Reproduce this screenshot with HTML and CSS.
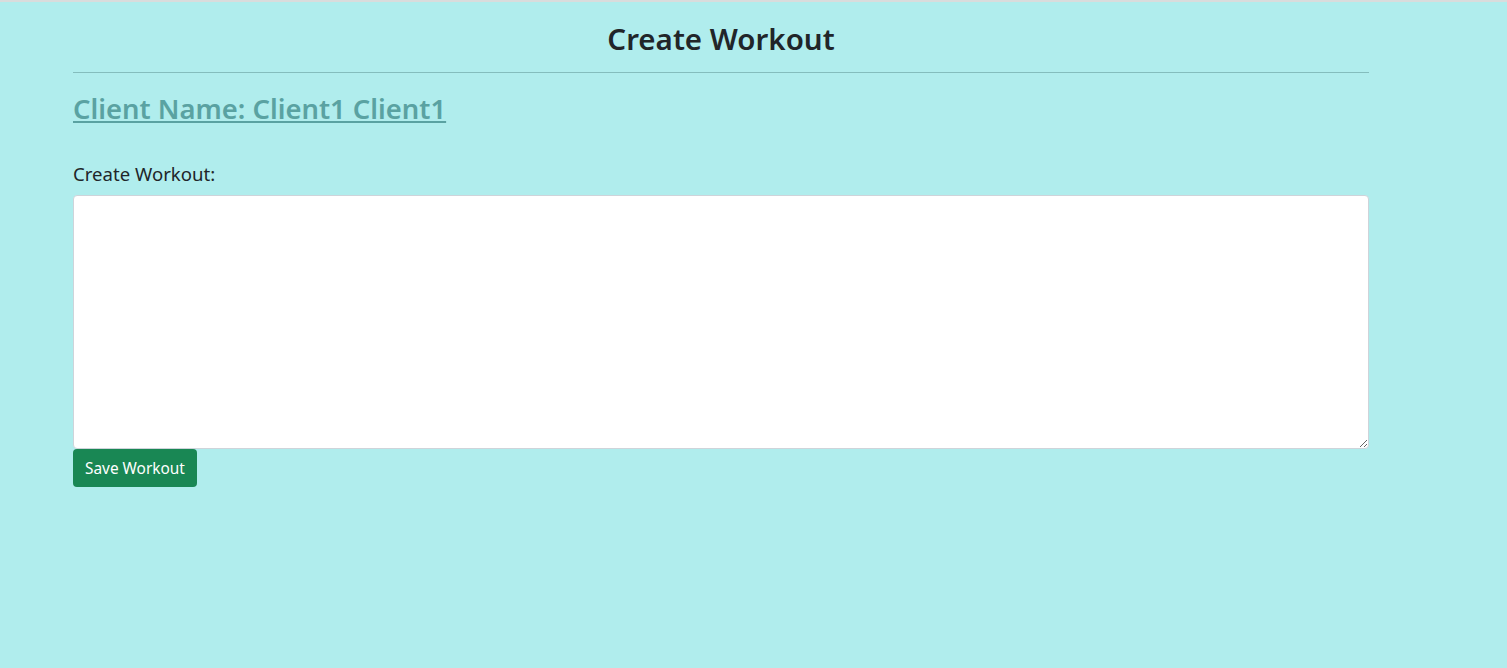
FILE: index.html
```html
<!DOCTYPE html>
<html>
<head>
<meta charset="utf-8">
<link rel="stylesheet" href="styles.css">
</head>
<body>
<div class="topline"></div>
<main class="container">
  <h1 class="title">Create Workout</h1>
  <hr class="rule">
  <h2 class="client"><a href="#">Client Name: Client1 Client1</a></h2>
  <form class="form">
    <label class="label" for="w">Create Workout:</label>
    <textarea id="w" class="area"></textarea>
    <button type="button" class="btn">Save Workout</button>
  </form>
</main>
</body>
</html>
```
FILE: styles.css
```css
html, body {
  margin: 0;
  padding: 0;
  height: 100%;
}
body {
  background: #b0eded;
  font-family: "Noto Sans", "Open Sans", sans-serif;
  color: #212529;
}
.topline {
  height: 2px;
  background: #d9dcdc;
}
.container {
  width: 1296px;
  margin-left: 73px;
}
.title {
  margin: 20px 0 0;
  text-align: center;
  font-size: 29.5px;
  font-weight: 600;
  line-height: 34px;
}
.rule {
  margin: 16px 0 0;
  border: 0;
  border-top: 1px solid #84bdbd;
}
.client {
  margin: 19px 0 0;
  font-size: 27.4px;
  font-weight: 600;
  line-height: 34px;
}
.client a {
  color: #5aa2a2;
  text-decoration: underline;
}
.form {
  margin-top: 36px;
  display: flex;
  flex-direction: column;
  align-items: flex-start;
}
.label {
  font-size: 18.6px;
  line-height: 24px;
  margin-bottom: 9px;
}
.area {
  box-sizing: border-box;
  width: 1296px;
  height: 254px;
  border: 1px solid #ced4da;
  border-radius: 4px;
  background: #fff;
  margin: 0;
}
.btn {
  box-sizing: border-box;
  height: 38px;
  padding: 0 12px;
  border: 0;
  border-radius: 4px;
  background: #198754;
  color: #fff;
  font-family: inherit;
  font-size: 15.4px;
}
```
